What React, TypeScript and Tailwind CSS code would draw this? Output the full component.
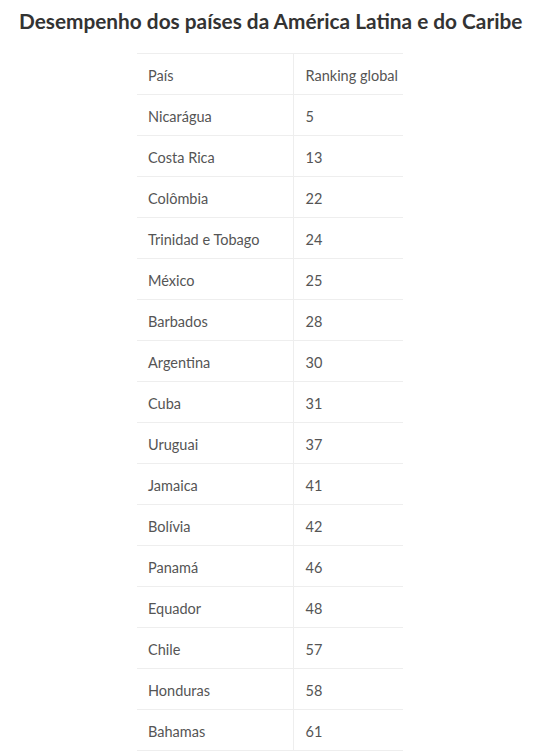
import React from 'react';

const rows: [string, number][] = [
  ['Nicarágua', 5],
  ['Costa Rica', 13],
  ['Colômbia', 22],
  ['Trinidad e Tobago', 24],
  ['México', 25],
  ['Barbados', 28],
  ['Argentina', 30],
  ['Cuba', 31],
  ['Uruguai', 37],
  ['Jamaica', 41],
  ['Bolívia', 42],
  ['Panamá', 46],
  ['Equador', 48],
  ['Chile', 57],
  ['Honduras', 58],
  ['Bahamas', 61],
];

const App: React.FC = () => {
  return (
    <div className="w-[560px] h-[752px] overflow-hidden bg-white font-['Lato',sans-serif]">
      <h2 className="pt-[6px] pl-[19px] text-[20.8px] leading-[30px] font-bold text-[#333] whitespace-nowrap">
        Desempenho dos países da América Latina e do Caribe
      </h2>

      <table className="ml-[137px] mt-[17px] w-[266px] table-fixed border-collapse text-[14.5px] text-[#555]">
        <colgroup>
          <col className="w-[156px]" />
          <col className="w-[110px]" />
        </colgroup>
        <tbody>
          <tr className="border-t border-b border-[#eee]">
            <td className="h-[41px] pl-[11px] pt-[4px] border-r border-[#eee] whitespace-nowrap">País</td>
            <td className="h-[41px] pl-[12px] pt-[4px] whitespace-nowrap">Ranking global</td>
          </tr>
          {rows.map(([name, rank]) => (
            <tr key={name} className="border-b border-[#eee]">
              <td className="h-[41px] pl-[11px] pt-[4px] border-r border-[#eee] whitespace-nowrap">{name}</td>
              <td className="h-[41px] pl-[12px] pt-[4px]">{rank}</td>
            </tr>
          ))}
        </tbody>
      </table>
    </div>
  );
};

export default App;
